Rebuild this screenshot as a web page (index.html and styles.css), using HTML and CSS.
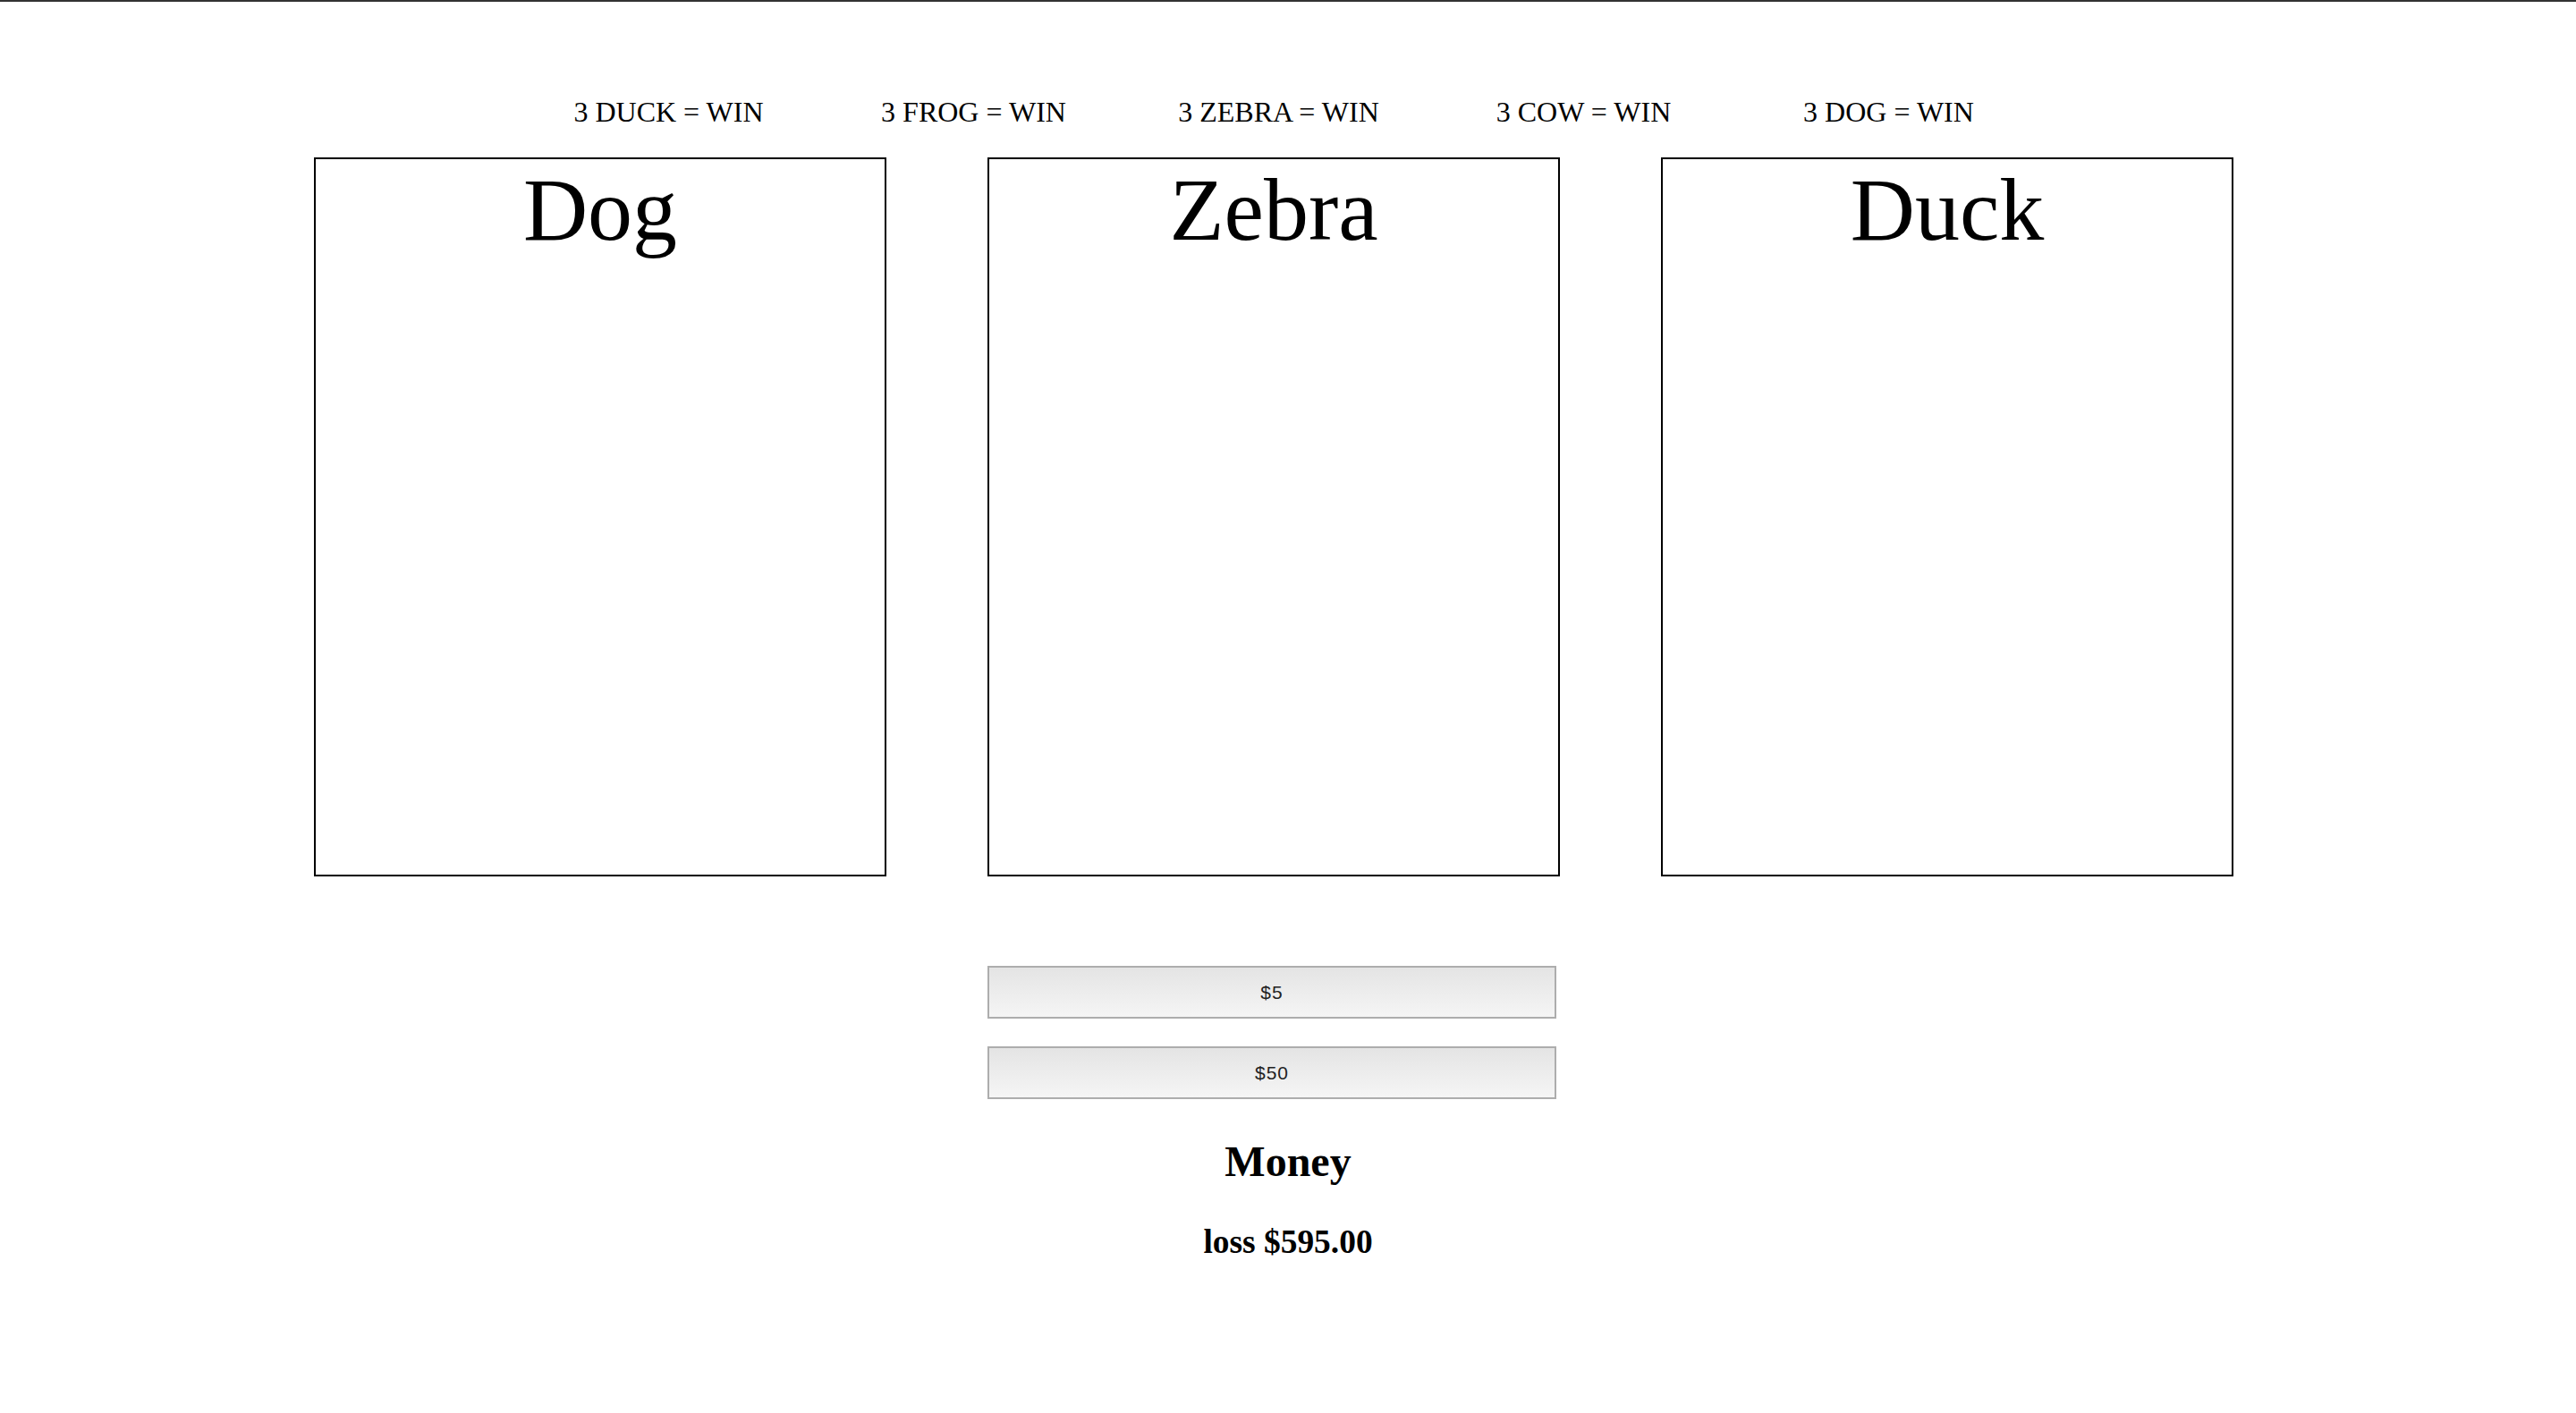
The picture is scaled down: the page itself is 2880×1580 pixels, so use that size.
FILE: index.html
```html
<!DOCTYPE html>
<html lang="en">
<head>
<meta charset="utf-8">
<title>Slots</title>
<link rel="stylesheet" href="styles.css">
</head>
<body>
<div class="topline"></div>
<div class="labels">
  <div class="label">3 DUCK = WIN</div>
  <div class="label">3 FROG = WIN</div>
  <div class="label">3 ZEBRA = WIN</div>
  <div class="label">3 COW = WIN</div>
  <div class="label">3 DOG = WIN</div>
</div>
<div class="reels">
  <div class="reel"><div class="reel-title">Dog</div></div>
  <div class="reel"><div class="reel-title">Zebra</div></div>
  <div class="reel"><div class="reel-title">Duck</div></div>
</div>
<div class="bets">
  <button class="bet" type="button">$5</button>
  <button class="bet" type="button">$50</button>
</div>
<h2 class="money">Money</h2>
<h3 class="result">loss $595.00</h3>
</body>
</html>
```

FILE: styles.css
```css
html, body {
  margin: 0;
  padding: 0;
  background: #fff;
}
body {
  font-family: "Liberation Serif", "Times New Roman", serif;
  color: #000;
  width: 2880px;
}
.topline {
  height: 2px;
  background: #333;
}
.labels {
  display: grid;
  grid-template-columns: repeat(5, 341px);
  margin: 105px 0 0 577px;
  font-size: 32px;
  line-height: 36px;
}
.label {
  text-align: center;
  white-space: nowrap;
}
.reels {
  display: flex;
  gap: 113px;
  margin: 33px 0 0 351px;
}
.reel {
  box-sizing: border-box;
  width: 640px;
  height: 804px;
  border: 2px solid #000;
  padding-top: 2px;
}
.reel-title {
  font-size: 100px;
  line-height: 110px;
  text-align: center;
}
.bets {
  display: flex;
  flex-direction: column;
  gap: 31px;
  margin: 100px 0 0 1104px;
  width: 636px;
}
.bet {
  box-sizing: border-box;
  width: 636px;
  height: 59px;
  margin: 0;
  padding: 0;
  border: 2px solid #adadad;
  border-radius: 0;
  background: linear-gradient(to bottom, #e4e4e4, #f5f5f5);
  font-family: "Liberation Sans", Arial, sans-serif;
  font-size: 21px;
  letter-spacing: 1px;
  color: #222;
  display: flex;
  align-items: center;
  justify-content: center;
}
.money {
  margin: 42px 0 0;
  font-size: 48px;
  line-height: 56px;
  font-weight: bold;
  text-align: center;
}
.result {
  margin: 40px 0 0;
  font-size: 37.44px;
  line-height: 44px;
  font-weight: bold;
  text-align: center;
}
```
